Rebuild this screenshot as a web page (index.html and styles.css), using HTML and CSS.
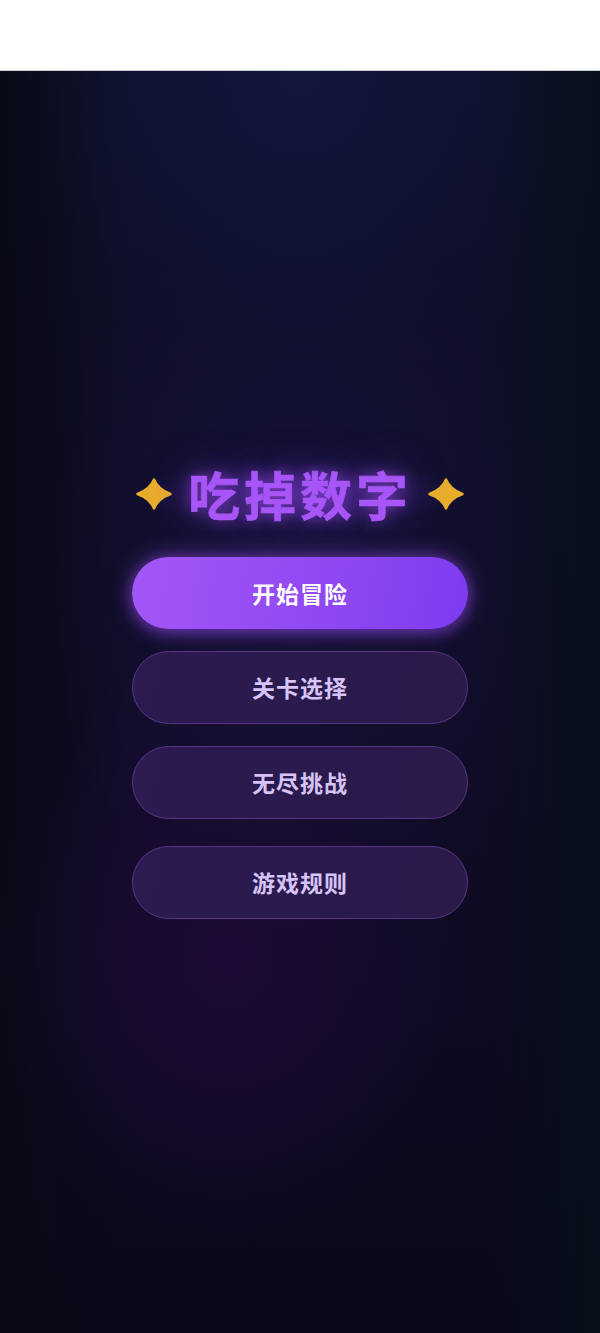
FILE: index.html
```html
<!DOCTYPE html>
<html lang="zh-CN">
<head>
  <meta charset="UTF-8" />
  <meta name="viewport" content="width=device-width, initial-scale=1.0"/>
  <title>吃掉数字</title>
  <link rel="stylesheet" href="styles.css">
</head>
<body>
  <div class="topbar"></div>

  <main class="stage">
    <div class="menu">
      <h1 class="title">
        <svg class="sparkle" viewBox="0 0 36 32" aria-hidden="true">
          <path d="M18 1.5 Q22 11.5 34.5 16 Q22 20.5 18 30.5 Q14 20.5 1.5 16 Q14 11.5 18 1.5 Z"/>
        </svg>
        <span class="title-text">吃掉数字</span>
        <svg class="sparkle" viewBox="0 0 36 32" aria-hidden="true">
          <path d="M18 1.5 Q22 11.5 34.5 16 Q22 20.5 18 30.5 Q14 20.5 1.5 16 Q14 11.5 18 1.5 Z"/>
        </svg>
      </h1>

      <div class="buttons">
        <button class="btn btn-primary">开始冒险</button>
        <button class="btn">关卡选择</button>
        <button class="btn">无尽挑战</button>
        <button class="btn btn-last">游戏规则</button>
      </div>
    </div>
  </main>
</body>
</html>
```

FILE: styles.css
```css
:root {
  --bg: #0d0b1f;
  --accent: #a855f7;
  --accent-dark: #7c3aed;
  --gold: #e9ad2d;
  --ghost-bg: #2a1a4c;
  --ghost-border: #573684;
  --ghost-text: #d7c3f7;
}

* {
  margin: 0;
  padding: 0;
  box-sizing: border-box;
  font-family: "Noto Sans CJK SC", "Noto Sans", sans-serif;
}

body {
  background: #ffffff;
  min-height: 100vh;
  display: flex;
  flex-direction: column;
}

.topbar {
  height: 71px;
  background: #ffffff;
  border-bottom: 1px solid #c9c9cf;
}

.stage {
  flex: 1;
  min-height: 1261px;
  display: flex;
  align-items: center;
  justify-content: center;
  padding-bottom: 20px;
  background:
    radial-gradient(ellipse 55% 30% at 50% 0%, rgba(20, 24, 66, 0.8), transparent 80%),
    radial-gradient(ellipse 50% 30% at 38% 70%, rgba(32, 10, 58, 0.85), transparent 80%),
    radial-gradient(ellipse 50% 35% at 50% 40%, rgba(26, 22, 66, 0.65), transparent 85%),
    linear-gradient(to right, #090a16 0%, transparent 22%, transparent 80%, #07101a 100%),
    linear-gradient(to bottom, #0f112c 0%, #0f0c26 45%, #0e0a22 75%, #0a0817 100%);
}

.menu {
  display: flex;
  flex-direction: column;
  align-items: center;
}

.title {
  display: flex;
  align-items: center;
  gap: 16px;
  margin-bottom: 34px;
  border-radius: 40px;
  background: radial-gradient(ellipse 50% 55% at 50% 50%, rgba(124, 58, 237, 0.26), transparent 100%);
}

.title-text {
  font-size: 52px;
  font-weight: 700;
  letter-spacing: 4px;
  color: var(--accent);
  line-height: 1.1;
  -webkit-text-stroke: 0.6px var(--accent);
  text-shadow: 0 0 16px rgba(168, 85, 247, 0.6), 0 0 40px rgba(124, 58, 237, 0.5);
}

.sparkle {
  flex-shrink: 0;
  width: 36px;
  height: 32px;
  fill: var(--gold);
  stroke: var(--gold);
  stroke-width: 2.5;
  stroke-linejoin: round;
}

.buttons {
  display: flex;
  flex-direction: column;
  gap: 22px;
}

.btn {
  width: 336px;
  height: 73px;
  border-radius: 37px;
  border: 1px solid var(--ghost-border);
  background: linear-gradient(100deg, #2c1a50, #2a1a4c 60%, #2b1949);
  color: var(--ghost-text);
  font-size: 23px;
  font-weight: 700;
  letter-spacing: 1px;
  cursor: pointer;
}

.btn-primary {
  height: 72px;
  border: none;
  background: linear-gradient(100deg, #a457f6 0%, #9149f3 55%, #7d3cee 100%);
  color: #ffffff;
  box-shadow: 0 0 22px rgba(168, 85, 247, 0.55), 0 4px 14px rgba(124, 58, 237, 0.4);
}

.btn-last {
  margin-top: 5px;
}
```
